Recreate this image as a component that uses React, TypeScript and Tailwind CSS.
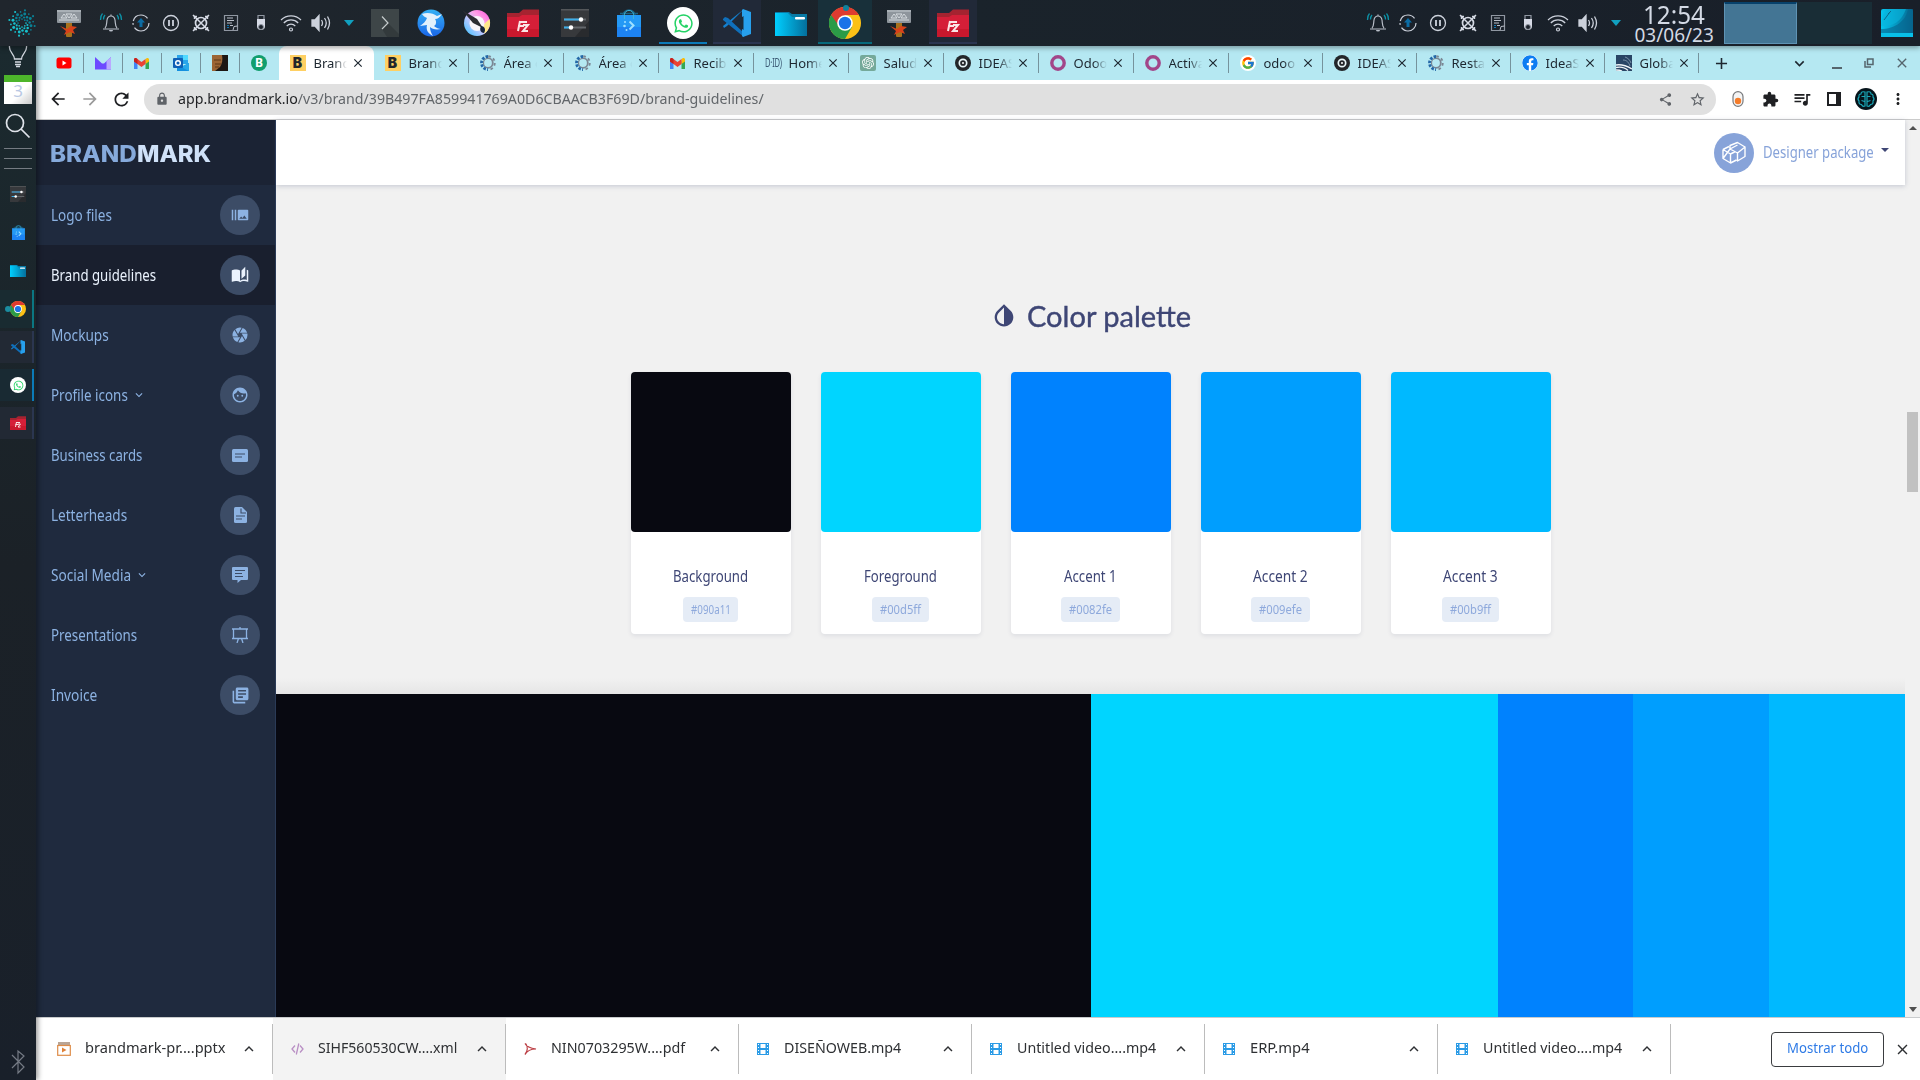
import { useLayoutEffect, useRef } from "react";
import type { ReactNode } from "react";
import {
  MdArrowBack, MdArrowForward, MdAutoStories, MdBurstMode, MdCamera, MdClose, MdExtension, MdFace,
  MdInvertColors, MdKeyboardArrowDown, MdKeyboardArrowUp, MdLibraryBooks, MdLock, MdMoreVert,
  MdQueueMusic, MdRefresh, MdShare, MdStarBorder, MdAdd,
} from "react-icons/md";
import { FaWhatsapp, FaFacebook } from "react-icons/fa";
import { FcGoogle } from "react-icons/fc";
import { SiOpenai } from "react-icons/si";

/* Text squeezed or stretched horizontally to an exact width. */
function Fit({ w, className = "", children }: { w: number; className?: string; children: ReactNode }) {
  const ref = useRef<HTMLSpanElement>(null);
  useLayoutEffect(() => {
    const el = ref.current;
    if (el) el.style.transform = `scaleX(${w / el.offsetWidth})`;
  }, [w]);
  return (
    <span className="inline-flex shrink-0 whitespace-nowrap" style={{ width: w }}>
      <span ref={ref} className={`block shrink-0 origin-left ${className}`}>{children}</span>
    </span>
  );
}

/* ---------- desktop icons ---------- */

const Hammer = () => (
  <svg width="26" height="30" viewBox="0 0 26 30">
    <rect x="10" y="13" width="6" height="16" rx="1" fill="#a8701c" />
    <rect x="1" y="2" width="24" height="13" rx="1" fill="#8e959c" />
    <rect x="1" y="2" width="24" height="2" fill="#a9b0b6" />
    <path d="M3 12h20M5 10l3-4 3 4zM10 6h6l-3 4zM15 10l3-4 3 4z" stroke="#d5dade" strokeWidth="1" fill="none" />
    <path d="M4 18l7 3 4-3 6 1-4 3 2 4-5-2-6 3 2-4z" fill="#d9421a" />
  </svg>
);

const dots = Array.from({ length: 48 }, (_, i) => {
  const arm = i % 8;
  const k = Math.floor(i / 8);
  const a = (arm / 8) * Math.PI * 2 + k * 0.36;
  const r = 4 + k * 1.8;
  return { x: 14 + Math.cos(a) * r, y: 14 + Math.sin(a) * r, s: 0.85 + (k % 4) * 0.2, c: arm < 4 ? "#16c2ce" : "#0a8296" };
});
const Swirl = () => (
  <svg width="28" height="28" viewBox="0 0 28 28">
    {dots.map((d, i) => <circle key={i} cx={d.x} cy={d.y} r={d.s} fill={d.c} />)}
  </svg>
);

const Bell = () => (
  <svg width="24" height="22" viewBox="0 0 24 22" fill="none">
    <path d="M4 17h16M6 16c2-2 1.500-5 2-8 .5-3 2-4 4-4s3.500 1 4 4c.5 3 0 6 2 8M12 4V2.500" stroke="#b9bfc9" strokeWidth="1.200" />
    <path d="M10 18a2 1.500 0 0 0 4 0z" fill="#b9bfc9" />
    <path d="M1.500 8c0-3 .5-5 2-6.500M4.500 7.500c0-2 .5-3.500 1.500-4.500M22.500 8c0-3-.5-5-2-6.500M19.500 7.500c0-2-.5-3.500-1.500-4.500" stroke="#0d93a8" strokeWidth="1.300" />
  </svg>
);
const Update = () => (
  <svg width="20" height="20" viewBox="0 0 20 20" fill="none">
    <circle cx="10" cy="10" r="8" stroke="#cdd2dc" strokeWidth="1.200" strokeDasharray="20 3 2 2 18 5" />
    <path d="M10 5l4 4.500h-2.500V14h-3V9.500H6z" fill="#0c6ca4" />
  </svg>
);
const Pause = () => (
  <svg width="20" height="20" viewBox="0 0 20 20" fill="none" stroke="#cdd2dc">
    <circle cx="10" cy="10" r="7.500" strokeWidth="1.300" />
    <path d="M8 7v6M12 7v6" strokeWidth="1.800" />
  </svg>
);
const Crossed = () => (
  <svg width="20" height="20" viewBox="0 0 20 20" fill="none" stroke="#d5dae4">
    <circle cx="10" cy="10" r="5.500" strokeWidth="1.700" />
    <path d="M2 2L18 18M18 2L2 18" strokeWidth="1.500" />
    <path d="M3.500 6V3.500H6M14 3.500h2.500V6M16.500 14v2.500H14M6 16.500H3.500V14" strokeWidth="1.400" />
  </svg>
);
const Note = () => (
  <svg width="16" height="18" viewBox="0 0 16 18" fill="none">
    <path d="M1.500 1.500h13v15h-13z" stroke="#9097a2" strokeWidth="1.200" />
    <path d="M4 4h6M4 6.500h7M4 9h5M7 11.500h3" stroke="#b9bfc9" />
    <path d="M4 11.500h2M4 13.500h2" stroke="#1276b0" />
    <path d="M10 16l1-3.500 3.500-.5" stroke="#b9bfc9" />
  </svg>
);
const Usb = () => (
  <svg width="12" height="18" viewBox="0 0 12 18" fill="none">
    <path d="M3 5V1.500h6V5" stroke="#9097a2" strokeWidth="1.200" />
    <path d="M2 5h8v7a4 4 0 0 1-8 0z" fill="#d7dbe6" />
    <circle cx="6" cy="13" r="2.500" fill="#1d232c" stroke="#9097a2" />
  </svg>
);
const Wifi = () => (
  <svg width="24" height="20" viewBox="0 0 24 20" fill="none" stroke="#cdd2dc" strokeWidth="1.200">
    <path d="M2 7a14 14 0 0 1 20 0M4.800 10a10 10 0 0 1 14.400 0M7.700 13a6 6 0 0 1 8.600 0" />
    <circle cx="12" cy="16.500" r="1.500" />
  </svg>
);
const Volume = () => (
  <svg width="20" height="18" viewBox="0 0 20 18" fill="none" stroke="#cdd2dc" strokeWidth="1.300">
    <path d="M1 6h3l4-4.500v15L4 12H1z" fill="#cdd2dc" />
    <path d="M10.500 6q2 3 0 6M13.500 4q3.500 5 0 10M16.500 2.500q4 6.500 0 13" />
  </svg>
);
const Tri = () => (
  <svg width="10" height="6" viewBox="0 0 10 6"><path d="M0 0h10L5 6z" fill="#11a0bf" /></svg>
);

function Tray() {
  return (
    <>
      {[Bell, Update, Pause, Crossed, Note, Usb, Wifi, Volume].map((I, i) => (
        <div key={i} className="flex w-[30px] items-center justify-center"><I /></div>
      ))}
      <div className="flex w-[26px] items-center justify-center"><Tri /></div>
    </>
  );
}

const Terminal = () => (
  <svg width="28" height="28" viewBox="0 0 28 28">
    <rect width="28" height="28" fill="#3e4648" />
    <path d="M11 20l6-6 11 11v3H16z" fill="#333a3c" />
    <path d="M11 7.500l6 6.500-6 6" fill="none" stroke="#c5cbcc" strokeWidth="1.200" />
  </svg>
);
const Bird = () => (
  <svg width="28" height="28" viewBox="0 0 28 28">
    <defs><linearGradient id="bird" x1="0" y1="0" x2="0" y2="1"><stop stopColor="#35b0f4" /><stop offset="1" stopColor="#1a66e8" /></linearGradient></defs>
    <circle cx="14" cy="14" r="13.500" fill="url(#bird)" />
    <path d="M5 5C10 3 16 4 20 7L25 5C23 8 21 10 18 10 20 13 19 16 17 17 19 19 22 20 24 20 19 21 15 20 13 18 13 21 14 24 16 27 10 24 9 20 10 16L3 17C6 15 9 12 10 9 8 8 6 7 5 5z" fill="#e3f1fc" />
  </svg>
);
const Krita = () => (
  <svg width="30" height="28" viewBox="0 0 30 28">
    <defs><linearGradient id="krita" x1="1" y1="0" x2="0" y2="1"><stop stopColor="#ff4fe0" /><stop offset=".35" stopColor="#ff9fe6" /><stop offset=".6" stopColor="#b9c8ff" /><stop offset="1" stopColor="#2fc0ff" /></linearGradient></defs>
    <circle cx="16" cy="14" r="13" fill="url(#krita)" />
    <path d="M28.500 10a13 13 0 0 1-5 14.500l-4-6z" fill="#ffe98a" />
    <circle cx="16" cy="14.500" r="7.500" fill="#f8f4fa" />
    <path d="M1 1l15 9 6 9-10-5z" fill="#2c2c32" />
    <path d="M20 17c4 0 5 4 3 7-3 0-5-3-3-7z" fill="#16253c" />
  </svg>
);
const Filezilla = ({ s = 32 }: { s?: number }) => (
  <svg width={s} height={(s * 28) / 32} viewBox="0 0 32 28">
    <path d="M0 4h12l4-3.500h16V28H0z" fill="#a52330" />
    <path d="M0 8h12l3-2h17v22H0z" fill="#d51f38" />
    <path d="M0 20h32v8H0z" fill="#c9182d" />
    <path d="M12 13h8M11 17h6M13 12l-2 10M16 16h5l-5 6h5" stroke="#fbe6e6" strokeWidth="2" fill="none" />
  </svg>
);
const Settings = ({ s = 28 }: { s?: number }) => (
  <svg width={s} height={s} viewBox="0 0 28 28">
    <rect width="28" height="28" fill="#37393c" />
    <path d="M14 28L28 12v16z" fill="#292b2e" />
    <rect width="28" height="1.500" fill="#54575a" />
    <path d="M3 10.500h22M3 18.500h22" stroke="#63676b" strokeWidth="1.800" />
    <path d="M3 10.500h15M3 18.500h6" stroke="#3daee9" strokeWidth="1.800" />
    <circle cx="20" cy="10.500" r="2.200" fill="#fff" /><circle cx="10" cy="18.500" r="2.200" fill="#fff" />
  </svg>
);
const Discover = ({ s = 28 }: { s?: number }) => (
  <svg width={s} height={s} viewBox="0 0 28 28">
    <path d="M8 9V6a6 5 0 0 1 12 0v3M5 4.500h18" stroke="#1b6384" strokeWidth="1.300" fill="none" />
    <path d="M2 6h24v22H2z" fill="#2499f5" /><path d="M2 18h24v10H2z" fill="#1d83f2" />
    <path d="M9.500 10V5.500a4.500 4 0 0 1 9 0V10" stroke="#3db5d8" strokeWidth="1" fill="none" />
    <path d="M14.500 12.500l4 4-4 4" stroke="#9fe0ff" strokeWidth="2" fill="none" />
    <circle cx="10" cy="13" r="1" fill="#9fe0ff" /><circle cx="9.500" cy="17" r="1.300" fill="#9fe0ff" /><circle cx="11.500" cy="21" r="1" fill="#9fe0ff" />
  </svg>
);
const WhatsBig = () => (
  <div className="flex h-8 w-8 items-center justify-center rounded-full bg-white"><FaWhatsapp size={21} color="#25d366" /></div>
);
const Code = ({ s = 28 }: { s?: number }) => (
  <svg width={s} height={s} viewBox="0 0 28 28">
    <path d="M21 0L4 17l-3 2-1-2 21-17z" fill="#1480cf" />
    <path d="M0 10l2-2 3 1 16 15v4L0 11z" fill="#0f70bb" />
    <path d="M20 0l8 3v22l-8 3-1-1V1z" fill="#27a0ec" />
    <path d="M20.500 7v14L11 14z" fill="#1b2a38" />
  </svg>
);
const Folder = ({ s = 32 }: { s?: number }) => (
  <svg width={s} height={(s * 24) / 32} viewBox="0 0 32 24">
    <defs><linearGradient id="fold"><stop stopColor="#00cfff" /><stop offset="1" stopColor="#046f9c" /></linearGradient></defs>
    <path d="M0 0h14l3 2h15v6H0z" fill="#087aa5" />
    <path d="M0 1h13l4 4h15v19H0z" fill="url(#fold)" />
    <rect x="20" y="5" width="10" height="2.500" rx="1" fill="#fff" />
  </svg>
);
const Chrome = ({ s = 32 }: { s?: number }) => (
  <svg width={s} height={s} viewBox="0 0 32 32">
    <circle cx="16" cy="16" r="16" fill="#fbc116" />
    <path d="M16 16L2.140 8A16 16 0 0 0 16 32l7-12z" fill="#2b9b47" />
    <path d="M2.140 8A16 16 0 0 1 29.860 8H16l-6 11z" fill="#de3b30" />
    <circle cx="16" cy="16" r="7.800" fill="#fff" /><circle cx="16" cy="16" r="6.200" fill="#1a73e8" />
  </svg>
);

function TopPanel() {
  return (
    <div className="relative z-20 flex h-[46px] shrink-0 items-stretch bg-linear-to-r from-[#20262d] via-[#1a232b] to-[#191f29] shadow-[0_2px_5px_rgba(0,0,0,0.35)]">
      <div className="flex w-[44px] items-center justify-center"><Swirl /></div>
      <div className="mr-[2px] flex w-[50px] items-center justify-center"><Hammer /></div>
      <Tray />
      <div className="flex w-[46px] items-center justify-center"><Terminal /></div>
      <div className="flex w-[46px] items-center justify-center"><Bird /></div>
      <div className="flex w-[44px] items-center justify-center"><Krita /></div>
      <div className="flex w-[50px] items-center justify-center"><Filezilla /></div>
      <div className="flex w-[54px] items-center justify-center"><Settings /></div>
      <div className="flex w-[54px] items-center justify-center"><Discover /></div>
      <div className="mx-[3px] mb-[2px] flex w-[48px] items-center justify-center border-b-2 border-[#0b7ab8] pt-[4px]"><WhatsBig /></div>
      <div className="mx-[3px] mb-[2px] flex w-[48px] items-center justify-center border-b-2 border-[#2b3550] bg-[#212938] pt-[4px]"><Code /></div>
      <div className="flex w-[54px] items-center justify-center pt-[2px]"><Folder /></div>
      <div className="mb-[2px] flex w-[54px] items-center justify-center border-b-2 border-[#07697b] bg-[#18303a] pt-[4px]">
        <div className="relative"><Chrome /><i className="absolute -top-[2px] left-[14px] h-[6px] w-[6px] rounded-full bg-[#10829c]" /></div>
      </div>
      <div className="flex w-[54px] items-center justify-center"><Hammer /></div>
      <div className="mx-[3px] mb-[2px] flex w-[48px] items-center justify-center border-b-2 border-[#2b3550] bg-[#212938] pt-[4px]"><Filezilla /></div>
      <div className="flex-1" />
      <Tray />
      <div className="mr-[5px] flex w-[90px] flex-col items-center text-[#d3d9e4]">
        <Fit w={62} className="text-[25px] leading-[28px]">12:54</Fit>
        <Fit w={79} className="text-[19px] leading-[15px]">03/06/23</Fit>
      </div>
      <div className="mt-[2px] h-[42px] w-[73px] border border-t-2 border-[#5f93b4] border-t-[#07416b] bg-[#437594]" />
      <div className="mr-[9px] mt-[2px] h-[42px] w-[75px] bg-[#192d36]" />
      <div className="mt-[9px] h-[28px] w-[32px]">
        <svg width="32" height="28" viewBox="0 0 32 28">
          <defs><linearGradient id="desk"><stop stopColor="#06c5ee" /><stop offset="1" stopColor="#05668f" /></linearGradient></defs>
          <rect width="32" height="28" rx="2" fill="url(#desk)" />
          <path d="M0 20C14 20 25 12 27 0h5v24H0z" fill="#06628c" opacity=".6" />
          <path d="M0 24h32v4H0z" fill="#08bfe8" /><path d="M0 17C10 18 20 14 25 0H8L2 6z" fill="#09b4dc" opacity=".6" />
          <path d="M3 11l6-8M7 5l3-3" stroke="#0a6a8c" />
        </svg>
      </div>
      <div className="w-[7px]" />
    </div>
  );
}

function Dock() {
  const cell = "flex h-[38.200px] items-center justify-center";
  return (
    <div className="relative z-10 flex w-[36px] shrink-0 flex-col bg-linear-to-b from-[#1b2a2f] via-[#1b2127] to-[#19202a] shadow-[2px_0_5px_rgba(0,0,0,0.4)]">
      <svg width="36" height="29" viewBox="0 0 36 29" fill="none" stroke="#d3d8e0" strokeWidth="1.300">
        <path d="M9.500 0c-1 6 5 8 5 13h7c0-5 6-7 5-13M15 16h6M15 18.500h6M16 20.500h4" />
      </svg>
      <div className="ml-[4px] flex h-[29px] w-[28px] flex-col bg-linear-to-br from-white from-60% to-[#c9c9c9]">
        <div className="h-[7px] bg-[#4db52b]" />
        <div className="text-center text-[17px] leading-[18px] text-[#b9c8e4]">3</div>
      </div>
      <svg className="mt-[9px]" width="36" height="26" viewBox="0 0 36 26" fill="none" stroke="#dfe3ea" strokeWidth="1.700">
        <circle cx="15" cy="10" r="8.500" /><path d="M21 16l8.500 8.500" />
      </svg>
      <div className="mx-[4px] mt-[9px] h-[21px] border-y border-[#757b82] pt-[9px]"><div className="h-px bg-[#757b82]" /></div>
      <div className={`${cell} mt-[6px]`}><Settings s={16} /></div>
      <div className={cell}><Discover s={15} /></div>
      <div className={`${cell} pt-[2px]`}><Folder s={16} /></div>
      <div className={`${cell} relative mr-[2px] border-r-2 border-[#0b7682] bg-[#192b31] pl-[4px]`}>
        <i className="absolute left-[5px] h-[6px] w-[6px] rounded-full bg-[#1b8ca0]" /><Chrome s={16} />
      </div>
      <div className="flex h-[38.200px] items-center"><div className="mr-[2px] flex h-[32px] w-[34px] items-center justify-center border-r-2 border-[#2b3650] bg-[#222934] pl-[4px]"><Code s={14} /></div></div>
      <div className="flex h-[38.200px] items-center"><div className="mr-[2px] flex h-[32px] w-[34px] items-center justify-center border-r-2 border-[#0b7ab8] bg-[#192a33] pl-[4px]"><span className="flex h-4 w-4 items-center justify-center rounded-full bg-white"><FaWhatsapp size={11} color="#25d366" /></span></div></div>
      <div className="flex h-[38.200px] items-center"><div className="mr-[2px] flex h-[32px] w-[34px] items-center justify-center border-r-2 border-[#2b3650] bg-[#222934] pl-[4px]"><Filezilla s={16} /></div></div>
      <svg className="mt-auto mb-[5px]" width="36" height="26" viewBox="0 0 36 26" fill="none" stroke="#757b85" strokeWidth="1.200">
        <path d="M12 6l12 12-6 6V2l6 5-12 12" />
      </svg>
    </div>
  );
}

/* ---------- favicons ---------- */

const Youtube = () => (
  <svg width="16" height="16" viewBox="0 0 16 16"><rect x=".5" y="2.500" width="15" height="11" rx="2.500" fill="#f00" /><path d="M6.500 5.500v5l4-2.500z" fill="#fff" /></svg>
);
const Proton = () => (
  <svg width="16" height="14" viewBox="0 0 16 14"><path d="M0 1l7 6.500 2 0L16 1v12.500H0z" fill="#6d4aff" /><path d="M11.500 5L16 1v12.500h-4.500z" fill="#bba9ff" /></svg>
);
const Gmail = () => (
  <svg width="15" height="12" viewBox="0 0 15 12">
    <path d="M0 2v10h3.500V4z" fill="#4285f4" /><path d="M15 2v10h-3.500V4z" fill="#34a853" />
    <path d="M11.500 2L13 1q2-.5 2 1.500v2l-3.500 2.500z" fill="#fbbc04" /><path d="M0 2.500Q0 .5 2 1l5.500 4L11.500 2v5l-4 3-4-3L0 4.500z" fill="#ea4335" />
    <path d="M0 2.500Q0 .5 2 1l1.500 1v5L0 4.500z" fill="#c5221f" />
  </svg>
);
const Outlook = () => (
  <svg width="16" height="16" viewBox="0 0 16 16">
    <rect x="4" width="11" height="9" fill="#2aa5ea" /><rect x="10" y="0" width="5" height="5" fill="#50d9ff" />
    <path d="M4 8l6 3 6-3v8H4z" fill="#1490df" /><path d="M16 8v8L8 12z" fill="#28a8ea" /><rect y="3" width="10" height="10" rx="1" fill="#0f5fb5" />
    <circle cx="5" cy="8" r="2.300" fill="none" stroke="#fff" strokeWidth="1.500" />
  </svg>
);
const Face = () => (
  <svg width="16" height="16" viewBox="0 0 16 16"><rect width="16" height="16" fill="#1d1713" /><path d="M0 0h10c1 5 0 9-2 12l-5 4H0z" fill="#9c6535" /><path d="M2 5h7M3 9h6M3 12h4" stroke="#5d3818" /></svg>
);
const LetterB = () => (
  <div className="flex h-4 w-4 items-center justify-center rounded-full bg-[#119e6d] text-[12px] font-bold leading-none text-white">B</div>
);
const Bm = () => (
  <div className="flex h-4 w-4 items-center justify-center bg-[#ffd063] font-['Inter'] text-[14px] font-black leading-none text-[#23262b]">B</div>
);
const Gear = () => (
  <svg width="16" height="16" viewBox="0 0 16 16" fill="none">
    <circle cx="8" cy="8" r="4.800" stroke="#7b8794" strokeWidth="1.800" />
    <circle cx="8" cy="8" r="6.800" stroke="#7b8794" strokeWidth="1.800" strokeDasharray="2.700 2.640" />
    <path d="M8 .8a7.200 7.200 0 0 0 0 14.400" stroke="#b5e8f2" strokeWidth="4" />
    <path d="M8 1.500a6.500 6.500 0 0 0 0 13" stroke="#2468a8" strokeWidth="2.800" strokeDasharray="2.500 1.300" />
  </svg>
);
const Did = () => (
  <div className="flex w-4 items-center"><Fit w={17} className="text-[12px] tracking-tight text-[#3c5a75]">D·ID)</Fit></div>
);
const Gpt = () => (
  <div className="flex h-4 w-4 items-center justify-center rounded-[2px] bg-[#75a99a]"><SiOpenai size={12} color="#fff" /></div>
);
const Disc = () => (
  <svg width="16" height="16" viewBox="0 0 16 16"><circle cx="8" cy="8" r="8" fill="#23262a" /><circle cx="8" cy="8" r="3.700" fill="none" stroke="#e9f6f9" strokeWidth="1.700" /><circle cx="8" cy="8" r="1" fill="#fff" /></svg>
);
const Odoo = () => (
  <svg width="16" height="16" viewBox="0 0 16 16"><circle cx="8" cy="8" r="6.200" fill="none" stroke="#a24689" strokeWidth="3.400" /></svg>
);
const Goog = () => <div className="flex h-4 w-4 items-center justify-center rounded-full bg-white"><FcGoogle size={14} /></div>;
const Fb = () => <FaFacebook size={16} color="#0d7df2" className="rounded-full bg-white" />;
const Globe = () => (
  <svg width="16" height="16" viewBox="0 0 16 16"><rect width="16" height="16" fill="#294565" /><path d="M0 10c6-1 11 1 16 4M0 12.500c5-1 9 0 12 3M0 15c3 0 4 0 6 1" stroke="#f1f5f8" strokeWidth="1.300" fill="none" /><path d="M7 5c4 0 6 3 7 6M9 2c3 1 5 3 6 6" stroke="#8ea3b8" strokeWidth=".8" fill="none" /></svg>
);

const tabs: { t: string; I: () => ReactNode; n?: boolean }[] = [
  { t: "Brand", I: Bm }, { t: "Brand", I: Bm }, { t: "Área d", I: Gear }, { t: "Área d", I: Gear },
  { t: "Recib", I: Gmail }, { t: "Home", I: Did }, { t: "Salud", I: Gpt }, { t: "IDEAS", I: Disc },
  { t: "Odoo", I: Odoo }, { t: "Activa", I: Odoo }, { t: "odoo", I: Goog, n: true }, { t: "IDEAS", I: Disc, n: true },
  { t: "Resta", I: Gear, n: true }, { t: "IdeaS", I: Fb, n: true }, { t: "Globa", I: Globe, n: true },
];

function TabStrip() {
  return (
    <div className="flex h-[34px] shrink-0 items-center bg-[#b5e8f2] pl-[8.500px] text-[#1d2730]">
      {[Youtube, Proton, Gmail, Outlook, Face, LetterB].map((I, i) => (
        <div key={i} className={`flex h-5 w-[39px] items-center justify-center ${i < 5 ? "border-r border-[#76939c]" : ""}`}><I /></div>
      ))}
      {tabs.map(({ t, I, n }, i) => (
        <div
          key={i}
          className={`flex shrink-0 items-center pl-[11px] ${n ? "w-[94px]" : "w-[95px]"} ${i === 0 ? "h-[34px] rounded-t-lg bg-white" : "h-5 border-r border-[#76939c]"}`}
        >
          <div className="flex w-4 shrink-0 justify-center"><I /></div>
          <div className="ml-[8px] w-[33px] overflow-hidden whitespace-nowrap text-[13px] leading-5 [mask-image:linear-gradient(to_right,#000_60%,transparent)]">{t}</div>
          <MdClose size={14} className="ml-[4px] shrink-0" />
        </div>
      ))}
      <MdAdd size={19} className="ml-[13px]" />
      <div className="flex-1" />
      <MdKeyboardArrowDown size={19} className="mr-[23px]" />
      <div className="mr-[22px] mt-[9px] h-[2px] w-[10px] bg-[#55656d]" />
      <svg className="mr-[20px]" width="10" height="10" viewBox="0 0 10 10" fill="none" stroke="#55656d" strokeWidth="1.500"><path d="M3.500 1h5.500v5.500H3.500zM1 3v6h6" /></svg>
      <MdClose size={16} className="mr-[10px] text-[#55656d]" />
    </div>
  );
}

function Toolbar() {
  return (
    <div className="flex h-[40px] shrink-0 items-center border-b border-[#cbcbcb] bg-white pb-px text-[#1f2023]">
      <div className="flex w-[108px] items-center pl-[12px]">
        <MdArrowBack size={20} className="mr-[12px]" />
        <MdArrowForward size={20} className="mr-[11px] text-[#9a9a9a]" />
        <MdRefresh size={21} />
      </div>
      <div className="flex h-[31px] w-[1572px] items-center rounded-full bg-[#e0e0e0]">
        <MdLock size={14} className="ml-[11px] mr-[9px] text-[#5f6368]" />
        <Fit w={586} className="-mt-[2px] text-[15px] text-[#62666a]"><span className="text-[#1f2023]">app.brandmark.io</span>/v3/brand/39B497FA859941769A0D6CBAACB3F69D/brand-guidelines/</Fit>
        <div className="flex-1" />
        <MdShare size={15} className="mr-[16px] text-[#5f6368]" />
        <MdStarBorder size={17} className="mr-[10px] text-[#5f6368]" />
      </div>
      <div className="flex items-center pl-[6px]">
        <div className="flex w-8 justify-center"><svg width="12" height="16" viewBox="0 0 12 16"><rect x="1" y=".7" width="10" height="14.600" rx="5" fill="#f4f4f4" stroke="#77797c" strokeWidth="1.200" /><circle cx="6" cy="10" r="3.200" fill="#f57c2a" /></svg></div>
        <div className="flex w-8 justify-center"><MdExtension size={17} /></div>
        <div className="flex w-8 justify-center"><MdQueueMusic size={20} /></div>
        <div className="flex w-8 justify-center"><div className="h-[14px] w-[14px] border-2 border-r-[5px] border-[#1f2023]" /></div>
        <div className="flex w-8 justify-center">
          <svg width="22" height="22" viewBox="0 0 22 22" fill="none"><circle cx="11" cy="11" r="11" fill="#06141b" /><path d="M10 4q-4-1-4 2-2.500 0-2 3-2 2 0 4-.5 3.500 2.500 3.500 1 2.500 3.500 1.500zM12 4q4-1 4 2 2.500 0 2 3 2 2 0 4 .5 3.500-2.500 3.500-1 2.500-3.500 1.500zM6.500 8.500h3M6.500 12.500l3 1M15.500 8.500h-3M15.500 12.500l-3 1" stroke="#1aa7b8" strokeWidth="1.200" /></svg>
        </div>
        <div className="flex w-8 justify-center"><MdMoreVert size={18} /></div>
      </div>
    </div>
  );
}

/* ---------- sidebar ---------- */

const Card = () => <svg width="16" height="13" viewBox="0 0 16 13"><rect width="16" height="13" rx="1.500" fill="#8cb2e2" /><path d="M3 5h10M3 8h7" stroke="#3c4c66" strokeWidth="1.200" /></svg>;
const Letter = () => <svg width="13" height="16" viewBox="0 0 13 16"><path d="M1.500 0H8l5 5v9.500q0 1.500-1.500 1.500h-10Q0 16 0 14.500v-13Q0 0 1.500 0z" fill="#8cb2e2" /><path d="M7 1.500V6h5M2 9h9M2 12h6" stroke="#3c4c66" strokeWidth="1.100" fill="none" /></svg>;
const Chat = () => <svg width="16" height="16" viewBox="0 0 16 16"><path d="M1 0h14q1 0 1 1v11q0 1-1 1H9l-3.500 3v-3H1q-1 0-1-1V1q0-1 1-1z" fill="#8cb2e2" /><path d="M3 3.500h10M3 6.500h7M3 9.500h8" stroke="#3c4c66" strokeWidth="1.100" /></svg>;
const Easel = () => <svg width="16" height="16" viewBox="0 0 16 16" fill="none" stroke="#8cb2e2" strokeWidth="1.300"><path d="M0 2h16M1.500 2v9.500h13V2M8 0v2M6.500 11.500L5 16M9.500 11.500L11 16M0 11.500h16" /></svg>;

const nav: { t: string; w: number; icon: ReactNode; down?: boolean; active?: boolean }[] = [
  { t: "Logo files", w: 61, icon: <MdBurstMode size={18} /> },
  { t: "Brand guidelines", w: 105, icon: <MdAutoStories size={18} />, active: true },
  { t: "Mockups", w: 58, icon: <MdCamera size={18} /> },
  { t: "Profile icons", w: 77, icon: <MdFace size={18} />, down: true },
  { t: "Business cards", w: 91, icon: <Card /> },
  { t: "Letterheads", w: 76, icon: <Letter /> },
  { t: "Social Media", w: 80, icon: <Chat />, down: true },
  { t: "Presentations", w: 86, icon: <Easel /> },
  { t: "Invoice", w: 46, icon: <MdLibraryBooks size={19} /> },
];

function Sidebar() {
  return (
    <div className="w-[240px] shrink-0 border-r border-[#2a3a56] bg-[#1f2a3e]">
      <div className="flex h-[65px] items-center bg-[#1b2334] pl-[14px] pt-[4px] font-['Inter'] text-[22.500px] font-extrabold leading-none">
        <Fit w={87} className="text-[#86aadb]">BRAND</Fit>
        <Fit w={74} className="text-[#cfe1f8]">MARK</Fit>
      </div>
      {nav.map(({ t, w, icon, down, active }) => (
        <div key={t} className={`flex h-[60px] items-center pl-[14.500px] pr-[15px] ${active ? "bg-[#191f2e] text-[#eaf2fd]" : "text-[#8cb2e2]"}`}>
          <Fit w={w} className="text-[15.500px] leading-6">{t}</Fit>
          {down && <MdKeyboardArrowDown size={14} className="ml-[4px]" />}
          <div className="ml-auto flex h-10 w-10 items-center justify-center rounded-full bg-[#3c4c66]">{icon}</div>
        </div>
      ))}
    </div>
  );
}

/* ---------- page ---------- */

const colors = [
  { n: "Background", w: 75, hex: "#090a11", hw: 40, bw: "w-[55px]", bg: "bg-[#080911]" },
  { n: "Foreground", w: 73, hex: "#00d5ff", hw: 41, bw: "w-[57px]", bg: "bg-[#00d5ff]" },
  { n: "Accent 1", w: 53, hex: "#0082fe", hw: 43, bw: "w-[59px]", bg: "bg-[#0082fe]" },
  { n: "Accent 2", w: 55, hex: "#009efe", hw: 43, bw: "w-[59px]", bg: "bg-[#009efe]" },
  { n: "Accent 3", w: 55, hex: "#00b9ff", hw: 41, bw: "w-[57px]", bg: "bg-[#00b9ff]" },
];

function Main() {
  return (
    <div className="flex min-w-0 flex-1 flex-col bg-[#f1f1f1]">
      <div className="relative flex h-[65px] shrink-0 items-center justify-end bg-white pr-[16px] shadow-[0_1px_5px_rgba(60,70,110,0.25)]">
        <div className="flex h-10 w-10 items-center justify-center rounded-full bg-[#87a3d9]">
          <svg width="24" height="24" viewBox="0 0 24 24" fill="none" stroke="#fff" strokeWidth="1.400" strokeLinejoin="round">
            <path d="M1 8.500v9l7.500 4.500 6-3M1 8.500l7.500 4.500V22M1 8.500L7 5.500M8 8l7.500 4v8l7.500-4.500V6L15.500 12M8 8v-3.500L15.500 1.500 23 6M8 8l7.500-4M8.500 13l4-2M8 8L1 17.500" />
          </svg>
        </div>
        <Fit w={111} className="-mt-[2px] ml-[9px] text-[15.500px] leading-6 text-[#87a3d9]">Designer package</Fit>
        <svg className="ml-[16px] mb-[5px]" width="8" height="5" viewBox="0 0 8 5"><path d="M0 0h8L4 4z" fill="#3e4675" /></svg>
      </div>
      <div className="flex h-[149px] shrink-0 items-end justify-center">
        <div className="flex h-[36px] items-center">
          <MdInvertColors size={28} className="mr-[9px] text-[#3e4675]" />
          <Fit w={164} className="font-['Lato'] text-[28.500px] font-normal leading-[36px] text-[#3e4675] [-webkit-text-stroke:0.4px_#3e4675]">Color palette</Fit>
        </div>
      </div>
      <div className="mt-[38px] flex h-[262px] shrink-0 justify-center gap-[30px]">
        {colors.map((c) => (
          <div key={c.n} className="flex w-[160px] flex-col items-center rounded bg-white shadow-[0_2px_4px_rgba(60,70,110,0.1)]">
            <div className={`h-[160px] w-full shrink-0 rounded ${c.bg}`} />
            <div className="mt-[33px] flex h-[22px] items-center"><Fit w={c.w} className="text-[15.500px] leading-[23px] text-[#3e4675]">{c.n}</Fit></div>
            <div className={`mt-[10px] flex h-[25px] items-center justify-center rounded bg-[#e5ecf6] ${c.bw}`}>
              <Fit w={c.hw} className="text-[12px] leading-[18px] text-[#8ea9dc]">{c.hex}</Fit>
            </div>
          </div>
        ))}
      </div>
      <div className="mt-[44px] h-[16px] shrink-0 bg-linear-to-b from-[#f1f1f1] to-[#e6e6e6]" />
      <div className="flex min-h-0 flex-1">
        <div className="w-1/2 bg-[#080911]" />
        <div className="w-1/4 bg-[#00d5ff]" />
        <div className="w-1/12 bg-[#0082fe]" />
        <div className="w-1/12 bg-[#009efe]" />
        <div className="w-1/12 bg-[#00b9ff]" />
      </div>
    </div>
  );
}

function Scrollbar() {
  return (
    <div className="flex w-[15px] shrink-0 flex-col items-center bg-[#f1f1f1]">
      <svg className="mt-[6px]" width="8" height="4" viewBox="0 0 8 4"><path d="M0 4L4 0l4 4z" fill="#505050" /></svg>
      <div className="mt-[282px] h-[80px] w-[11px] bg-[#c1c1c1]" />
      <svg className="mt-auto mb-[5px]" width="8" height="5" viewBox="0 0 8 5"><path d="M0 0h8L4 5z" fill="#505050" /></svg>
    </div>
  );
}

/* ---------- downloads ---------- */

const Pptx = () => <svg width="14" height="14" viewBox="0 0 14 14"><path d="M1 0h12v4H1z" fill="#b9a596" /><rect x=".7" y="3.500" width="12.600" height="9.800" fill="none" stroke="#de8c48" strokeWidth="1.200" /><path d="M5 5.500v5L9.500 8z" fill="#e08238" /></svg>;
const Xml = () => <svg width="13" height="12" viewBox="0 0 13 12" fill="none" stroke="#b98fc4" strokeWidth="1.300"><path d="M4 2.500L1 6l3 3.500M9 2.500L12 6 9 9.500M7.800.5l-2.500 11" /></svg>;
const Pdf = () => <svg width="13" height="12" viewBox="0 0 13 12" fill="none" stroke="#bc3f45" strokeWidth="1.200"><path d="M1 .5c1 2 4 4.500 11 5.500C7 6 3 8 1 11.500 4 8 4 3 1.500.5" /></svg>;
const Mp4 = () => <svg width="12" height="12" viewBox="0 0 12 12"><rect width="12" height="12" fill="#2a9be6" /><path d="M3.500 1h5v4h-5zM3.500 7h5v4h-5z" fill="#fff" /><path d="M1.500 1v10M10.500 1v10" stroke="#fff" strokeDasharray="1 2" /></svg>;

const files = [
  { t: "brandmark-pr....pptx", w: 141, I: Pptx }, { t: "SIHF560530CW....xml", w: 139, I: Xml },
  { t: "NIN0703295W....pdf", w: 134, I: Pdf }, { t: "DISEÑOWEB.mp4", w: 117, I: Mp4 },
  { t: "Untitled video....mp4", w: 139.500, I: Mp4 }, { t: "ERP.mp4", w: 60, I: Mp4 }, { t: "Untitled video....mp4", w: 139.500, I: Mp4 },
];

function Downloads() {
  return (
    <div className="flex h-[63px] shrink-0 items-stretch border-t border-[#c9cbcd] bg-white text-[#2e3033]">
      <div className="w-[4px]" />
      {files.map(({ t, w, I }, i) => (
        <div key={i} className={`flex w-[233px] shrink-0 items-center ${i === 1 ? "bg-[#f3f3f3]" : ""}`}>
          <div className="flex h-[50px] w-full items-center border-r border-[#bcbcbc]">
            <div className="ml-[16px] mr-[13px] flex w-4 justify-center"><I /></div>
            <Fit w={w} className="-mt-[2px] text-[14.500px]">{t}</Fit>
            <MdKeyboardArrowUp size={18} className="ml-auto mr-[14px]" />
          </div>
        </div>
      ))}
      <div className="ml-auto flex items-center">
        <div className="flex h-[35px] w-[113px] items-center justify-center rounded border border-[#3a3c3f]"><Fit w={81} className="-mt-px text-[13.500px] text-[#2f7be6]">Mostrar todo</Fit></div>
        <MdClose size={17} className="ml-[10px] mr-[9px]" />
      </div>
    </div>
  );
}

export default function App() {
  return (
    <div className="flex h-[1080px] w-[1920px] flex-col overflow-hidden bg-white font-['Noto_Sans',sans-serif]">
      <TopPanel />
      <div className="flex min-h-0 flex-1">
        <Dock />
        <div className="flex min-w-0 flex-1 flex-col">
          <TabStrip />
          <Toolbar />
          <div className="flex min-h-0 flex-1">
            <Sidebar />
            <Main />
            <Scrollbar />
          </div>
          <Downloads />
        </div>
      </div>
    </div>
  );
}
